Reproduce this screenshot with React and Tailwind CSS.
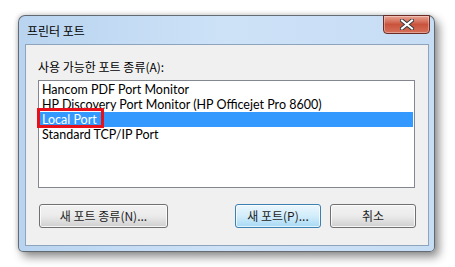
import React from 'react';

const ports = [
  'Hancom PDF Port Monitor',
  'HP Discovery Port Monitor (HP Officejet Pro 8600)',
  'Local Port',
  'Standard TCP/IP Port',
];

const font = { fontFamily: '"Noto Sans CJK KR", "Noto Sans", sans-serif' };

const Button = ({ children, primary, className }) => (
  <button
    className={
      'h-[24px] rounded-[3px] border text-[12px] leading-none text-[#1e1e1e] ' +
      (primary
        ? 'border-[#3c7fb1] bg-gradient-to-b from-[#eaf6fd] via-[#d2edfb] to-[#a7d9f5] shadow-[inset_0_0_0_1px_rgba(255,255,255,0.7)] '
        : 'border-[#707070] bg-gradient-to-b from-[#f2f2f2] via-[#ebebeb] to-[#cfcfcf] shadow-[inset_0_0_0_1px_rgba(255,255,255,0.8)] ') +
      className
    }
  >
    {children}
  </button>
);

const App = () => {
  return (
    <div className="w-[455px] h-[267px] bg-white overflow-hidden pl-[18px] pt-[15px]" style={font}>
      {/* 창 프레임 */}
      <div className="relative w-[417px] h-[237px] rounded-t-[7px] rounded-b-[5px] border border-[#3a3a3a]/70 bg-gradient-to-r from-[#b9d4f0] via-[#cde2f7] to-[#c7ddf4] shadow-[4px_5px_10px_rgba(0,0,0,0.45),-1px_-1px_4px_rgba(0,0,0,0.15)] flex flex-col">
        <div className="h-[28px] flex items-center pl-[8px] pt-[1px] text-[12px] text-black">프린터 포트</div>

        {/* 닫기 버튼 */}
        <div className="absolute top-[-1px] right-[4px] w-[47px] h-[19px] rounded-b-[4px] border border-[#6b2a24] bg-gradient-to-b from-[#e8a493] via-[#c9533d] to-[#d6705a] flex items-center justify-center shadow-[inset_0_0_0_1px_rgba(255,255,255,0.35)]">
          <svg width="14" height="11" viewBox="0 0 14 11">
            <path d="M2 1.5 L12 9.5 M12 1.5 L2 9.5" stroke="#3a3a3a" strokeWidth="4" strokeLinecap="square" />
            <path d="M2 1.5 L12 9.5 M12 1.5 L2 9.5" stroke="#ffffff" strokeWidth="2" strokeLinecap="square" />
          </svg>
        </div>

        {/* 클라이언트 영역 */}
        <div className="ml-[6px] mr-[5px] h-[202px] bg-[#f0f0f0] border border-[#8ea4bd] flex flex-col pl-[12px]">
          <div className="mt-[14px] h-[15px] leading-[15px] text-[12px] text-black">사용 가능한 포트 종류(A):</div>
          <div className="relative mt-[6px] w-[377px] h-[108px] bg-white border border-[#828790] p-[1px]">
            {ports.map((p, i) => (
              <div
                key={p}
                style={{ fontFamily: 'Lato, "Noto Sans", sans-serif' }}
                className={
                  'h-[15px] leading-[15px] pl-[2px] text-[12.5px] whitespace-nowrap ' +
                  (i === 2 ? 'bg-[#3399ff] text-white' : 'text-black')
                }
              >
                {p}
              </div>
            ))}
            {/* 강조 표시 */}
            <div className="absolute left-[-2px] top-[27px] w-[67px] h-[20px] border-[3px] border-[#e8101a]" />
          </div>
          <div className="mt-[16px] flex w-[378px]">
            <Button className="w-[129px] ml-[1px]">새 포트 종류(N)...</Button>
            <Button primary className="w-[86px] ml-[67px]">새 포트(P)...</Button>
            <Button className="w-[86px] ml-[9px]">취소</Button>
          </div>
        </div>
      </div>
    </div>
  );
};

export default App;
